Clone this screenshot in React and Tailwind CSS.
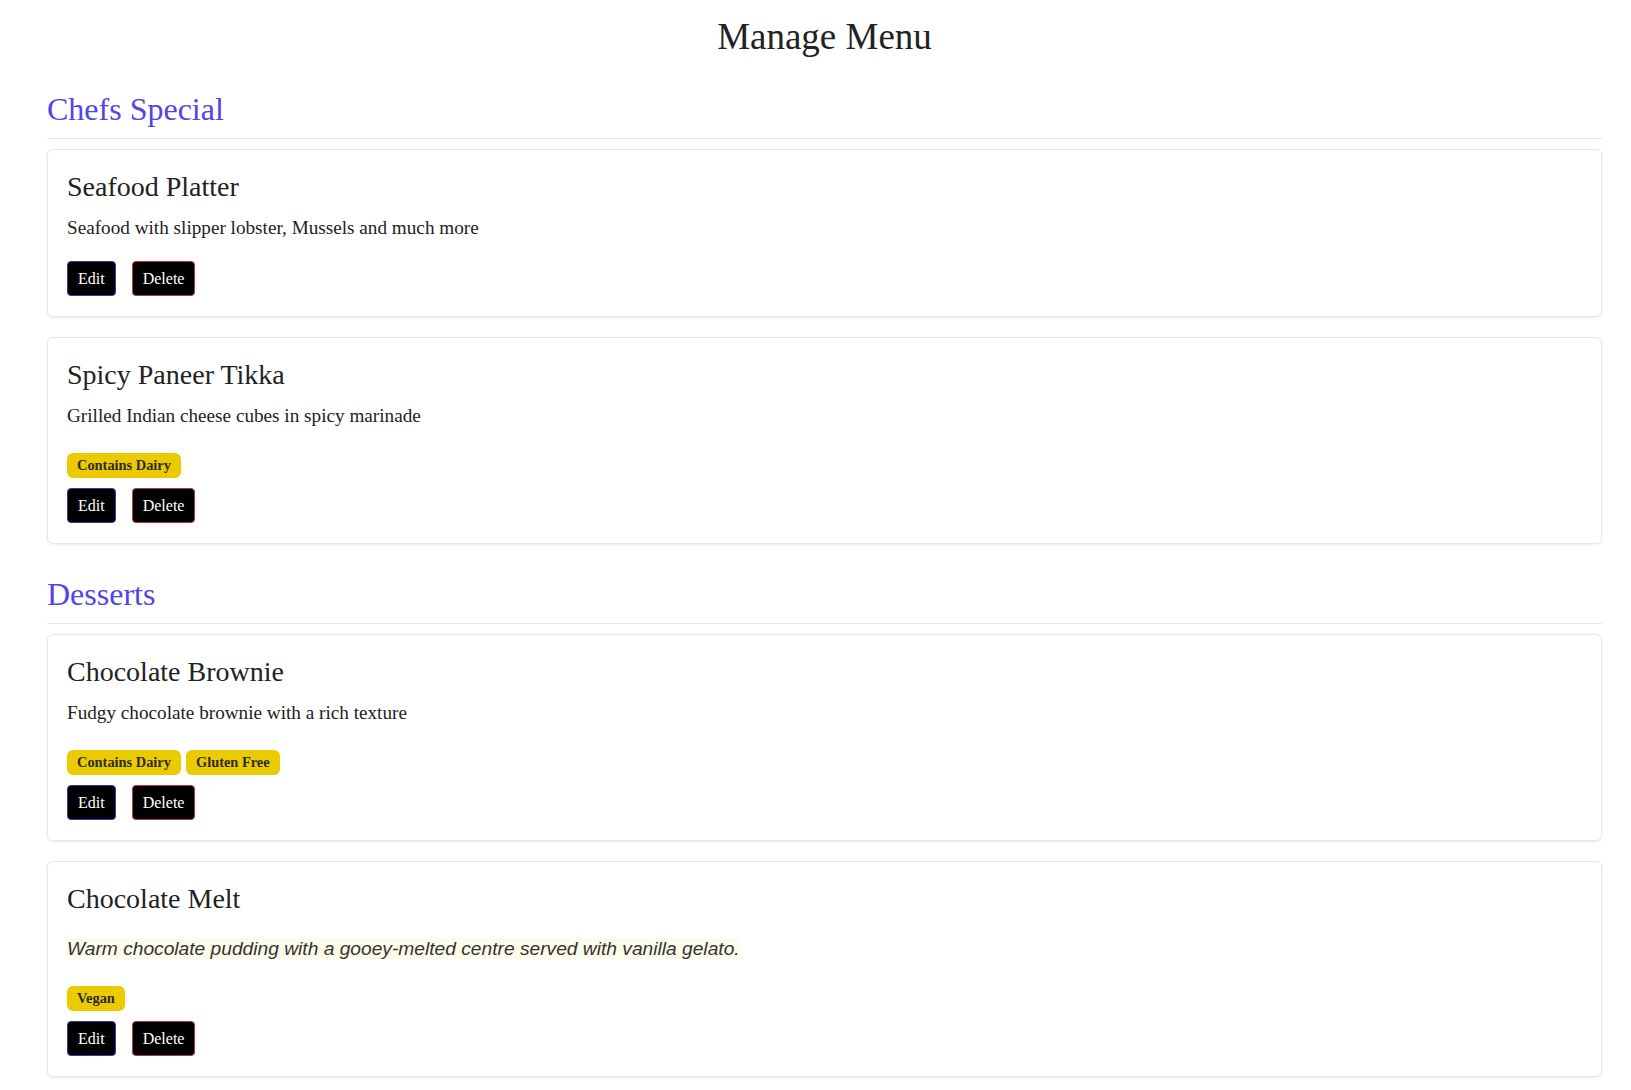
import React from 'react';

const serif = "font-['Liberation_Serif',_'Times_New_Roman',_serif]";

const sections = [
  {
    name: 'Chefs Special',
    items: [
      { id: 1, title: 'Seafood Platter', desc: 'Seafood with slipper lobster, Mussels and much more', tags: [] },
      { id: 2, title: 'Spicy Paneer Tikka', desc: 'Grilled Indian cheese cubes in spicy marinade', tags: ['Contains Dairy'] },
    ],
  },
  {
    name: 'Desserts',
    items: [
      { id: 3, title: 'Chocolate Brownie', desc: 'Fudgy chocolate brownie with a rich texture', tags: ['Contains Dairy', 'Gluten Free'] },
      {
        id: 4,
        title: 'Chocolate Melt',
        desc: 'Warm chocolate pudding with a gooey-melted centre served with vanilla gelato.',
        rich: true,
        tags: ['Vegan'],
      },
    ],
  },
];

function MenuCard({ item }) {
  return (
    <div className="bg-white border border-[#e5e7eb] rounded-md shadow-[0_1px_3px_rgba(0,0,0,0.08)] px-[19px] pt-[22px] pb-5">
      <h3 className="text-[28px] leading-[30px] text-[#222]">{item.title}</h3>

      {item.rich ? (
        <p className="mt-[21px] text-[19.2px] leading-[27px]">
          <em className="bg-[#fdfbea] text-[#333] font-['Liberation_Sans',_Arial,_sans-serif]">{item.desc}</em>
        </p>
      ) : (
        <p className="mt-[12px] text-[19.2px] leading-[27px] text-[#222]">{item.desc}</p>
      )}

      {item.tags.length > 0 && (
        <div className="mt-6 flex gap-[5px]">
          {item.tags.map((tag) => (
            <span key={tag} className="bg-[#ecca00] text-[#2b2b2b] font-bold text-[14.4px] leading-[21px] py-[2px] px-[10px] rounded-md">
              {tag}
            </span>
          ))}
        </div>
      )}

      <div className={`flex gap-4 ${item.tags.length > 0 ? 'mt-[10px]' : 'mt-5'}`}>
        <button className="bg-black text-white text-[16px] leading-[23px] py-[5px] px-[10px] border border-[#3b34b0] rounded">
          Edit
        </button>
        <button className="bg-black text-white text-[16px] leading-[23px] py-[5px] px-[10px] border border-[#b4343c] rounded">
          Delete
        </button>
      </div>
    </div>
  );
}

export default function App() {
  return (
    <div className={`${serif} bg-white min-h-screen pl-[47px] pr-[29px] pt-[15px] pb-4`}>
      <h1 className="text-center text-[37px] leading-[44px] text-[#222]">Manage Menu</h1>

      {sections.map((section) => (
        <section key={section.name} className="mt-[30px]">
          <h2 className="text-[32px] leading-[40px] text-[#5046e5] pb-[9px] border-b border-[#e5e7eb]">
            {section.name}
          </h2>
          <div className="mt-[10px] flex flex-col gap-5">
            {section.items.map((item) => (
              <MenuCard key={item.id} item={item} />
            ))}
          </div>
        </section>
      ))}
    </div>
  );
}
